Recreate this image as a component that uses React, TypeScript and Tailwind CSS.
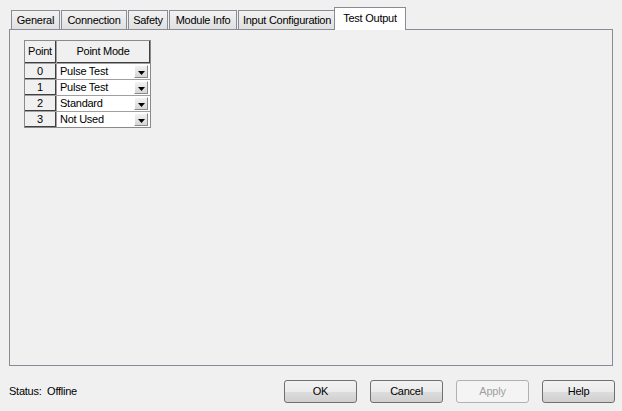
import React from "react";

const TABS: { label: string; w: string }[] = [
  { label: "General", w: "w-[49px]" },
  { label: "Connection", w: "w-[66px]" },
  { label: "Safety", w: "w-[40px]" },
  { label: "Module Info", w: "w-[68px]" },
  { label: "Input Configuration", w: "w-[98px]" },
];

const POINTS = [
  { n: "0", mode: "Pulse Test" },
  { n: "1", mode: "Pulse Test" },
  { n: "2", mode: "Standard" },
  { n: "3", mode: "Not Used" },
];

function DropButton() {
  return (
    <span className="ml-auto mr-[2px] flex h-[13px] w-[14px] items-end justify-center border-t border-l border-t-white border-l-white border-r border-b border-r-[#8a8a8a] border-b-[#8a8a8a] bg-gradient-to-b from-[#f2f2f2] to-[#d6d6d6] pb-[2px]">
      <svg width="7" height="4" viewBox="0 0 7 4">
        <path d="M0 0h7L3.5 4z" fill="#000" />
      </svg>
    </span>
  );
}

function Button({ label, disabled }: { label: string; disabled?: boolean }) {
  return (
    <button
      className={`h-[23px] w-[73px] rounded-[3px] border text-[11px] tracking-[-0.25px] ${
        disabled
          ? "border-[#adb2b5] bg-[#f4f4f4] text-[#a0a0a0]"
          : "border-[#707070] bg-[linear-gradient(#f2f2f2_0%,#ebebeb_50%,#dddddd_51%,#cfcfcf_100%)] text-black"
      }`}
    >
      {label}
    </button>
  );
}

export default function App() {
  return (
    <div
      className="flex h-[411px] w-[622px] flex-col bg-[#f0f0f0] pb-[8px] pt-[7px] text-[11px] tracking-[-0.25px] text-black"
      style={{ fontFamily: '"Liberation Sans", Arial, sans-serif' }}
    >
      {/* tab strip */}
      <div className="flex h-[22px] items-end gap-px pl-[11px]">
        {TABS.map((t) => (
          <div
            key={t.label}
            className={`${t.w} flex h-[19px] items-center justify-center border border-b-0 border-[#898c95] bg-gradient-to-b from-[#f2f2f2] to-[#e0e0e0] leading-none`}
          >
            {t.label}
          </div>
        ))}
        <div className="relative z-10 -mb-px -ml-[3px] flex h-[23px] w-[72px] items-center justify-center border border-b-0 border-[#898c95] bg-white pb-[2px] leading-none">
          Test Output
        </div>
      </div>

      {/* page */}
      <div className="mx-[9px] flex-1 border border-[#898c95] bg-[#f0f0f0] pl-[14px] pt-[10px]">
        <div className="grid w-[127px] grid-cols-[31px_93px] gap-px border border-[#8a8a8a] bg-[#a0a0a0]">
          <div className="flex h-[22px] items-center justify-center border-r border-b border-r-[#404040] border-b-[#404040] bg-[#f0f0f0]">
            Point
          </div>
          <div className="flex h-[22px] items-center justify-center border-r border-b border-r-[#404040] border-b-[#404040] bg-[#f0f0f0]">
            Point Mode
          </div>
          {POINTS.map((p) => (
            <React.Fragment key={p.n}>
              <div className="flex h-[15px] items-center justify-center border-r border-b border-r-[#404040] border-b-[#404040] bg-[#f0f0f0] leading-none">
                {p.n}
              </div>
              <div className="flex h-[15px] items-center bg-white pl-[3px] leading-none">
                {p.mode}
                <DropButton />
              </div>
            </React.Fragment>
          ))}
        </div>
      </div>

      {/* footer */}
      <div className="mt-[14px] flex h-[23px] items-center pl-[9px] pr-[7px]">
        <span>Status:&nbsp; Offline</span>
        <div className="ml-auto flex gap-[13px]">
          <Button label="OK" />
          <Button label="Cancel" />
          <Button label="Apply" disabled />
          <Button label="Help" />
        </div>
      </div>
    </div>
  );
}
